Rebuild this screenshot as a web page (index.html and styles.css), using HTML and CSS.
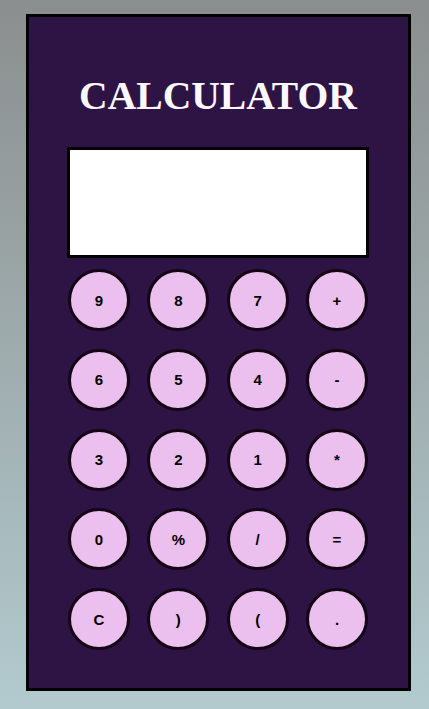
FILE: index.html
```html
<!DOCTYPE html>
<html>
<head>
<meta charset="utf-8">
<link rel="stylesheet" href="styles.css">
</head>
<body>
<div class="calc">
  <h1 class="title">CALCULATOR</h1>
  <div class="display"></div>
  <div class="keys">
    <button class="key">9</button>
    <button class="key">8</button>
    <button class="key">7</button>
    <button class="key">+</button>
    <button class="key">6</button>
    <button class="key">5</button>
    <button class="key">4</button>
    <button class="key">-</button>
    <button class="key">3</button>
    <button class="key">2</button>
    <button class="key">1</button>
    <button class="key">*</button>
    <button class="key">0</button>
    <button class="key">%</button>
    <button class="key">/</button>
    <button class="key">=</button>
    <button class="key">C</button>
    <button class="key">)</button>
    <button class="key">(</button>
    <button class="key">.</button>
  </div>
</div>
</body>
</html>
```
FILE: styles.css
```css
html, body {
  margin: 0;
  padding: 0;
}
body {
  min-height: 709px;
  background: linear-gradient(#8b8e8e, #b2cace);
  padding-top: 14px;
  box-sizing: border-box;
  overflow: hidden;
}
.calc {
  margin-left: 26px;
  width: 302px;
  padding: 60px 39px 38px 38px;
  background: #2d1445;
  border: 3px solid #000;
}
.title {
  margin: 0;
  font-family: "Liberation Serif", "Times New Roman", serif;
  font-weight: bold;
  font-size: 39.6px;
  line-height: 39px;
  color: #fdf8fb;
  text-align: center;
}
.display {
  margin-top: 31px;
  height: 105px;
  background: #fff;
  border: 3px solid #000;
}
.keys {
  margin: 11px 1px 0 1px;
  display: grid;
  grid-template-columns: repeat(4, 62px);
  column-gap: 17.33px;
  row-gap: 17.75px;
}
.key {
  width: 62px;
  height: 62px;
  padding: 0;
  border-radius: 50%;
  border: 3px solid #150615;
  background: #ebbfee;
  color: #000;
  font-family: "Liberation Sans", Arial, sans-serif;
  font-weight: bold;
  font-size: 15px;
  display: flex;
  align-items: center;
  justify-content: center;
}
```
